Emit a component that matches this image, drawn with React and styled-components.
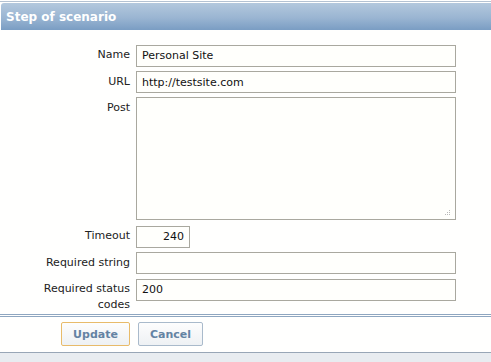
import styled, { createGlobalStyle } from "styled-components"

const GlobalStyle = createGlobalStyle`
  body {
    margin: 0;
    background: #fff;
    font-family: "DejaVu Sans", Verdana, sans-serif;
  }
`

const Page = styled.div`
  width: 491px;
  height: 362px;
  display: flex;
  flex-direction: column;
  background: #fffffe;
  overflow: hidden;
`

const TopLine = styled.div`
  height: 1px;
  margin-top: 1px;
  background: #b4c2d2;
`

const Header = styled.div`
  height: 27px;
  margin: 1px 0 0 1px;
  padding-left: 5px;
  display: flex;
  align-items: center;
  border-radius: 3px 0 0 0;
  background: linear-gradient(#b3c8dd, #9ab5d2 55%, #7a9dc3);
  color: #fff;
  font-size: 12px;
  font-weight: bold;
`

const Form = styled.div`
  display: grid;
  grid-template-columns: 92px 1fr;
  column-gap: 6px;
  padding: 14px 35px 0 38px;
`

const Label = styled.div`
  text-align: right;
  font-size: 11px;
  line-height: 16px;
  color: #222;
  padding-top: 3px;
  margin-bottom: ${p => p.$gap ?? 4}px;
`

const Field = styled.div`
  position: relative;
  margin-bottom: ${p => p.$gap ?? 4}px;
`

const Input = styled.input`
  box-sizing: border-box;
  width: ${p => p.$w || "100%"};
  height: ${p => p.$h || 22}px;
  border: 1px solid #a9a89f;
  background: #fffffc;
  padding: 0 5px;
  font-family: "DejaVu Sans", Verdana, sans-serif;
  font-size: 11px;
  color: #111;
  text-align: ${p => p.$align || "left"};
  outline: none;
`

const TextArea = styled.textarea`
  display: block;
  box-sizing: border-box;
  width: 100%;
  height: 123px;
  border: 1px solid #a9a89f;
  background: #fffffc;
  resize: none;
  outline: none;
`

const Grip = styled.svg`
  position: absolute;
  right: 5px;
  bottom: 4px;
`

const Separator = styled.div`
  margin-top: 1px;
  height: 1px;
  border-top: 1px solid #8ea6c0;
  border-bottom: 1px solid #8ea6c0;
`

const Buttons = styled.div`
  display: flex;
  gap: 8px;
  padding: 5px 0 0 61px;
  height: 30px;
`

const Button = styled.button`
  box-sizing: border-box;
  width: ${p => p.$w}px;
  height: 24px;
  border: 1px solid ${p => (p.$primary ? "#e8bb6a" : "#a9bacb")};
  border-radius: 2px;
  background: linear-gradient(#fdfdfd, #eef1f4);
  color: #6483a3;
  font-family: "DejaVu Sans", Verdana, sans-serif;
  font-size: 11px;
  font-weight: bold;
  padding: 0;
`

const BottomBar = styled.div`
  flex: 1;
  border-top: 1px solid #98a6b6;
  background: #e8ecf0;
`

const rows = [
  { label: "Name", value: "Personal Site" },
  { label: "URL", value: "http://testsite.com" }
]

export default function App() {
  return (
    <Page>
      <GlobalStyle />
      <TopLine />
      <Header>Step of scenario</Header>
      <Form>
        {rows.map(r => [
          <Label key={r.label + "l"}>{r.label}</Label>,
          <Field key={r.label + "f"}>
            <Input defaultValue={r.value} />
          </Field>
        ])}
        <Label $gap={5}>Post</Label>
        <Field $gap={5}>
          <TextArea />
          <Grip width="6" height="6" viewBox="0 0 6 6">
            <g fill="#b8b8b8">
              <rect x="4" y="0" width="1" height="1" />
              <rect x="2" y="2" width="1" height="1" />
              <rect x="4" y="2" width="1" height="1" />
              <rect x="0" y="4" width="1" height="1" />
              <rect x="2" y="4" width="1" height="1" />
              <rect x="4" y="4" width="1" height="1" />
            </g>
          </Grip>
        </Field>
        <Label>Timeout</Label>
        <Field>
          <Input $w="54px" $align="right" defaultValue="240" />
        </Field>
        <Label>Required string</Label>
        <Field>
          <Input />
        </Field>
        <Label $gap={0}>Required status codes</Label>
        <Field $gap={0}>
          <Input defaultValue="200" />
        </Field>
      </Form>
      <Separator />
      <Buttons>
        <Button $primary $w={69}>Update</Button>
        <Button $w={65}>Cancel</Button>
      </Buttons>
      <BottomBar />
    </Page>
  )
}
